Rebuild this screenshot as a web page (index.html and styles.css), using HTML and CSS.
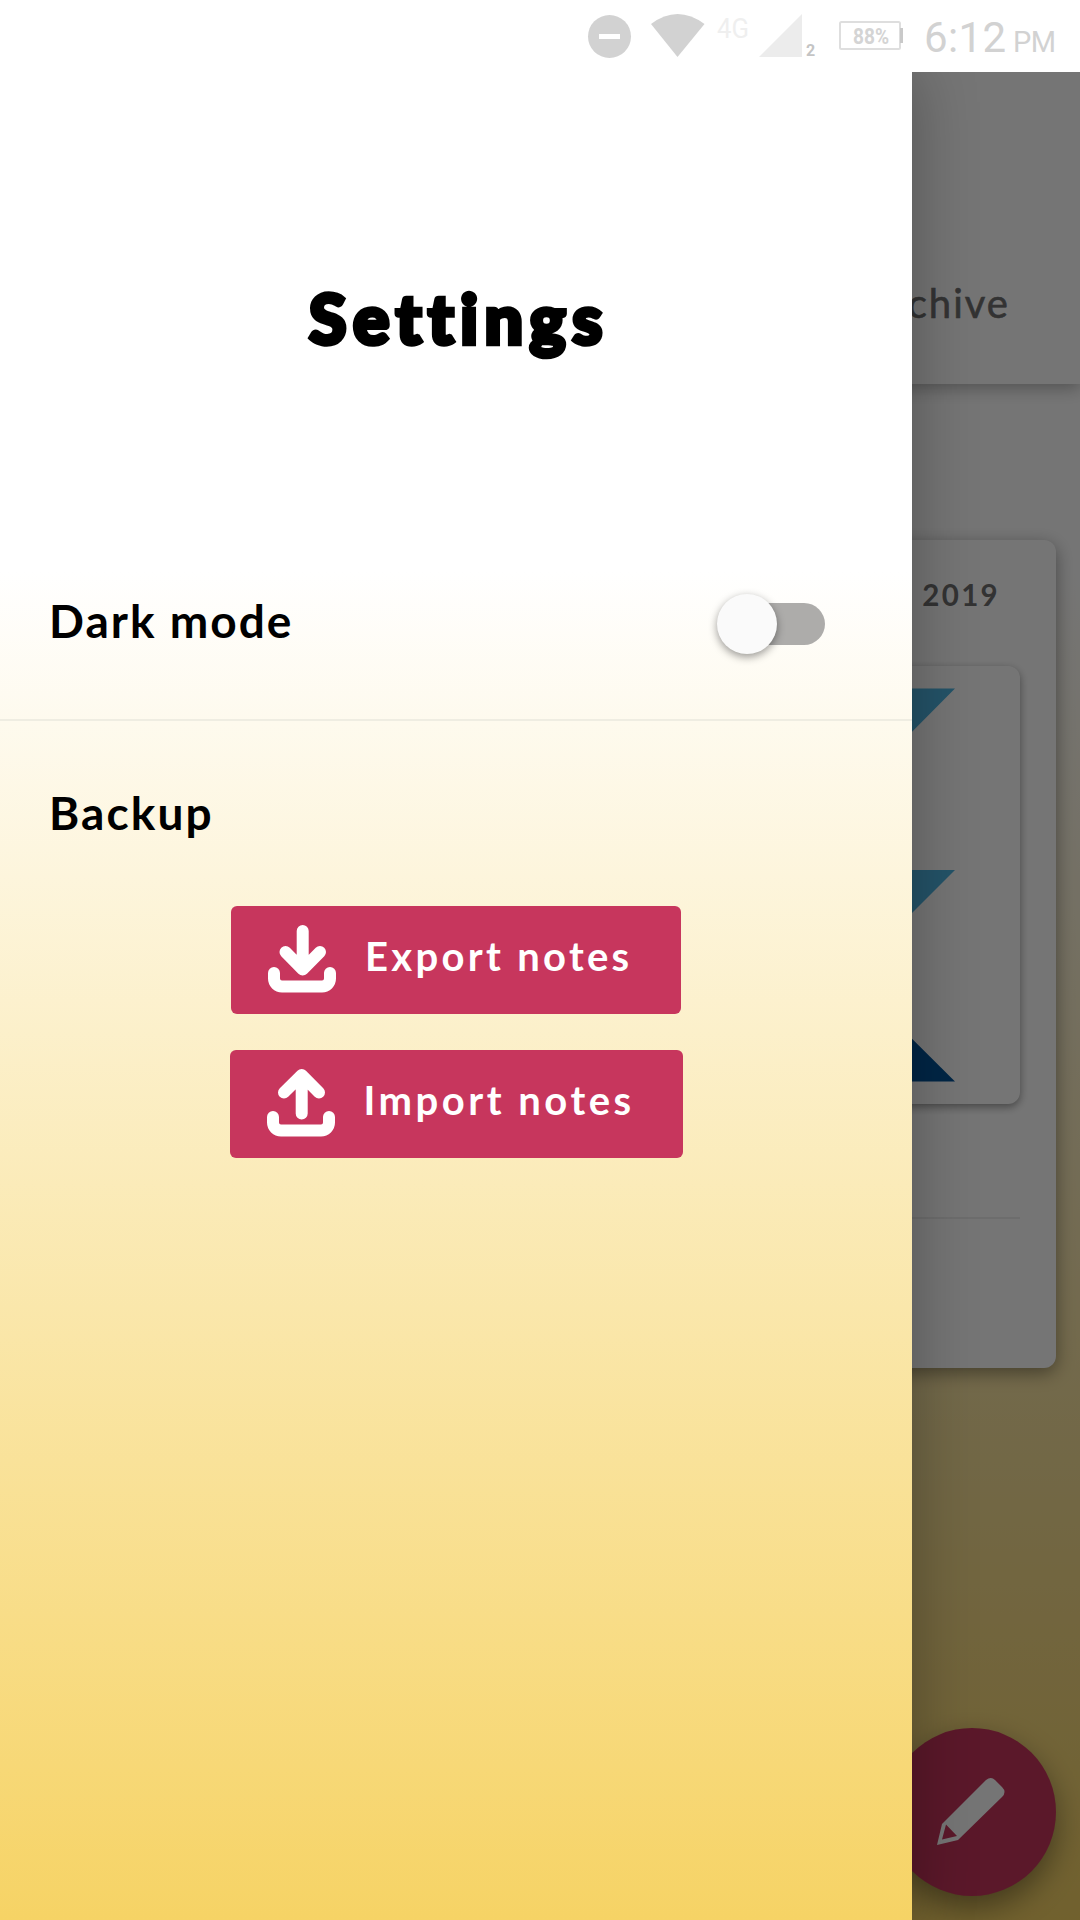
FILE: index.html
```html
<!DOCTYPE html>
<html lang="en">
<head>
<meta charset="utf-8">
<title>Settings</title>
<link rel="stylesheet" href="styles.css">
</head>
<body>
<header class="status">
  <svg class="status-icons" width="510" height="72" viewBox="570 0 510 72">
    <circle cx="609.5" cy="36.5" r="21.5" fill="#d2d2d2"/>
    <path d="M599 34h21v5h-21z" fill="#fff"/>
    <path d="M651 24Q677.500 4 704.500 24L677.500 57z" fill="#d2d2d2"/>
    <text x="717" y="38" font-size="27" textLength="32" lengthAdjust="spacingAndGlyphs" fill="#efefef">4G</text>
    <path d="M802 14V57H759z" fill="#ececec"/>
    <text class="bold" x="806" y="56" font-size="16" fill="#c4c4c4">2</text>
    <rect x="840" y="22" width="60" height="27" rx="1.500" fill="none" stroke="#dedede" stroke-width="2"/>
    <path d="M900 28h3v15h-3z" fill="#c9c9c9"/>
    <text class="bold" x="853" y="44" font-size="22" textLength="36" lengthAdjust="spacingAndGlyphs" fill="#d4d4d4">88%</text>
    <text x="924" y="52" font-size="42" textLength="82" fill="#d2d2d2">6:12</text>
    <text x="1013" y="52" font-size="29" textLength="43" fill="#d2d2d2">PM</text>
  </svg>
</header>
<div class="app">
  <main class="page">
    <nav class="tabs"><span>Archive</span></nav>
    <article class="card">
      <div class="date">2019</div>
      <div class="picture">
        <svg width="350" height="438" viewBox="670 666 350 438">
          <path d="M955 688.500H835L700 823l61 61zM955 870H835L729 976l106 106 60-60-46-46z" fill="#50b6e2"/>
          <path d="M955 1081.500H835L789 1036l80-40z" fill="#01549a"/>
        </svg>
      </div>
      <hr>
    </article>
    <div class="fab">
      <svg width="70" height="70" viewBox="0 0 70 70">
        <path fill-rule="evenodd" fill="#fff" d="M0 69L5 48 49 4Q54 0 58 4L65 11Q70 16 65 21L21 64zM5 63.500L20 60 9 48.500z"/>
      </svg>
    </div>
  </main>
  <div class="scrim"></div>
  <aside class="drawer">
    <h1>Settings</h1>
    <div class="row">
      <span>Dark mode</span>
      <div class="switch"><i></i></div>
    </div>
    <section class="backup">
      <h2>Backup</h2>
      <div class="actions">
        <button class="export">
          <svg width="68" height="68" viewBox="0 0 68 68"><path d="M34.700 6V44.500M17.500 27L34.700 44.500 52 27M6 48V53.500a8 8 0 0 0 8 8H54a8 8 0 0 0 8-8V48"/></svg>
          <span>Export notes</span>
        </button>
        <button class="import">
          <svg width="68" height="68" viewBox="0 0 68 68"><path d="M34.700 44.500V6M17 23.500L34.700 6 52 23.500M6 48V53.500a8 8 0 0 0 8 8H54a8 8 0 0 0 8-8V48"/></svg>
          <span>Import notes</span>
        </button>
      </div>
    </section>
  </aside>
</div>
</body>
</html>
```
FILE: styles.css
```css
* { box-sizing: border-box; }
body {
  margin: 0;
  width: 1080px;
  height: 1920px;
  overflow: hidden;
  background: #fff;
  font-family: Lato, "Open Sans", sans-serif;
  color: #000;
}
.status { height: 72px; display: flex; justify-content: flex-end; }
.status-icons { font-family: Roboto, sans-serif; }
.bold { font-weight: 700; }
.app { position: relative; height: 1848px; overflow: hidden; }
.page {
  height: 100%;
  background: linear-gradient(#fff 27%, #f6d365);
}
.tabs {
  height: 312px;
  padding: 201px 70px 0 0;
  background: #fff;
  text-align: right;
  font-size: 40px;
  line-height: 60px;
  letter-spacing: 2px;
  color: #707070;
  -webkit-text-stroke: .6px #707070;
  box-shadow: 0 4px 16px rgba(0, 0, 0, .3);
}
.card {
  margin: 156px 24px 0;
  height: 828px;
  padding: 37px 36px 0;
  background: #fff;
  border-radius: 12px;
  box-shadow: 0 5px 18px rgba(0, 0, 0, .4);
}
.date {
  height: 89px;
  padding-right: 20px;
  text-align: right;
  font-size: 29.5px;
  font-weight: 700;
  line-height: 36px;
  letter-spacing: 2.3px;
  color: #707070;
}
.picture {
  height: 438px;
  border-radius: 12px;
  display: flex;
  justify-content: flex-end;
  box-shadow: 0 3px 9px rgba(0, 0, 0, .4);
}
.card hr { height: 2px; margin: 113px 0 0; border: 0; background: #ededed; }
.fab {
  position: absolute;
  right: 24px;
  bottom: 24px;
  width: 168px;
  height: 168px;
  padding: 48px 0 0 49px;
  border-radius: 50%;
  background: #c7365d;
  box-shadow: 0 12px 30px rgba(0, 0, 0, .4);
}
.fab svg { display: block; }
.scrim { position: absolute; inset: 0; background: rgba(0, 0, 0, .54); }
.drawer {
  position: absolute;
  inset: 0 auto 0 0;
  width: 912px;
  background: linear-gradient(#fff 27%, #f6d365);
  box-shadow: 0 0 60px rgba(0, 0, 0, .3);
}
.drawer h1 {
  margin: 0;
  height: 456px;
  padding: 206px 0 0 6px;
  text-align: center;
  font-size: 68px;
  font-weight: 900;
  line-height: 80px;
  letter-spacing: 6.6px;
  -webkit-text-stroke: 4.5px #000;
}
.row {
  height: 193px;
  padding: 0 87px 0 49px;
  display: flex;
  align-items: center;
  justify-content: space-between;
  border-bottom: 2px solid #efede2;
  font-size: 46px;
  font-weight: 700;
  letter-spacing: 2px;
}
.row span { padding-bottom: 6px; }
.switch {
  width: 108px;
  height: 60px;
  display: flex;
  align-items: center;
}
.switch::after {
  content: "";
  width: 78px;
  height: 42px;
  margin-left: -30px;
  border-radius: 0 21px 21px 0;
  background: #adacaa;
}
.switch i {
  position: relative;
  flex: none;
  width: 60px;
  height: 60px;
  border-radius: 50%;
  background: #fafafa;
  box-shadow: 0 3px 9px rgba(0, 0, 0, .4);
}
.backup { padding-top: 62px; }
.backup h2 {
  margin: 0 0 63px 49px;
  font-size: 46px;
  line-height: 60px;
  letter-spacing: 2.1px;
}
.actions { display: flex; flex-direction: column; align-items: center; gap: 36px; }
.actions button {
  height: 108px;
  padding: 0 0 0 37px;
  display: flex;
  align-items: center;
  gap: 29px;
  border: 0;
  border-radius: 6px;
  background: #c7365d;
  color: #fff;
  font: 700 40px Lato, sans-serif;
  letter-spacing: 3.3px;
  white-space: nowrap;
}
.actions .export { width: 450px; }
.actions .import { width: 453px; letter-spacing: 3.5px; }
.actions svg {
  margin-bottom: 2px;
  fill: none;
  stroke: #fff;
  stroke-width: 12;
  stroke-linecap: round;
  stroke-linejoin: round;
}
.actions span { padding-bottom: 8px; }
```
